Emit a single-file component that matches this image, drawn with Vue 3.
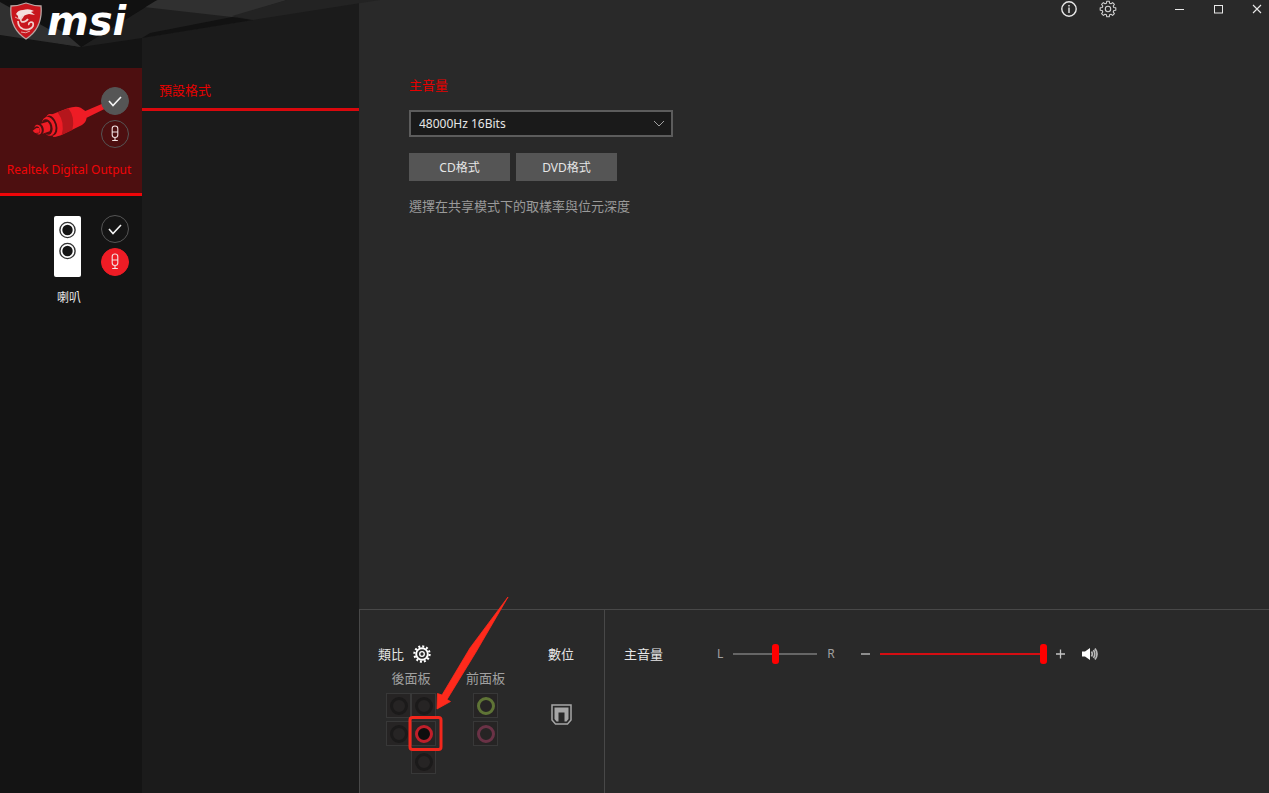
<template>
  <div class="audio-console">
    <!-- Header artwork -->
    <svg class="header-art" width="380" height="48" viewBox="0 0 380 48" aria-hidden="true">
      <polygon points="0,0 157,0 81,47 0,35" fill="#111111" />
      <polygon points="0,2 81,47 0,35" fill="#303030" />
      <polygon points="157,0 81,47 142,38 253,20 287,0" fill="#1f1f1f" />
      <polygon points="158,0 287,0 232,17 135,6" fill="#303030" />
      <polygon points="142,38 253,20 232,17 150,33" fill="#121212" />
      <polygon points="287,0 380,0 253,20 232,16" fill="#232323" />
      <polygon points="0,0 157,0 81,47 56,28 5,0" fill="#111111" />
      <polygon points="56,28 66,34 81,47 40,40" fill="#303030" />
    </svg>

    <!-- Device list -->
    <aside class="devices">
      <div class="brand">
        <svg class="shield" width="34" height="38" viewBox="0 0 34 38" aria-hidden="true">
          <path d="M17 1 Q25 4 32 4 Q34 26 17 37 Q0 26 2 4 Q9 4 17 1Z" fill="#c8161d" stroke="#b9a7a4" stroke-width="1.3" />
          <path d="M7 12 Q9 8 14 8 Q20 6 25 9 L22 10 L26 13 L20 12 Q14 13 14 16 Q9 20 9 14 Z" fill="#f3dfdd" />
          <path d="M14 14 Q10 18 13 20 Q17 20 19 17 M9 19 Q9 25 14 27 Q21 29 24 24 Q25 20 22 20 Q19 21 20 23" fill="none" stroke="#f0cfcc" stroke-width="1.7" />
          <path d="M6 15 L10 17 M12 30 Q17 32 21 29" fill="none" stroke="#e9a5a3" stroke-width="1" />
        </svg>
        <span class="brand-name">msi</span>
      </div>

      <ul class="device-list">
        <li v-for="device in devices" :key="device.id" class="device" :class="{ active: device.id === activeId }">
          <div class="device-body">
            <svg v-if="device.id === 'digital'" class="device-picture" width="101" height="61" viewBox="0 0 101 61" aria-hidden="true">
              <g transform="translate(25 -2) scale(0.3333)">
                <path d="M78 89 L128 70 Q152 62 167 68 L181 78 L232 56 L240 71 L185 98 Q183 112 171 120 L108 151 Q96 156 84 155Z" fill="#ee1c25" />
                <path d="M98 82 L130 70 Q151 96 142 135 L110 150 Q121 114 98 82Z" fill="#b5161c" />
                <ellipse cx="83" cy="121" rx="21" ry="35" transform="rotate(-16 83 121)" fill="#ee1c25" />
                <ellipse cx="78" cy="122" rx="18" ry="31" transform="rotate(-16 78 122)" fill="#4d0f10" />
                <ellipse cx="71" cy="124" rx="20" ry="29" transform="rotate(-16 71 124)" fill="#ee1c25" />
                <ellipse cx="66" cy="126" rx="16" ry="24" transform="rotate(-16 66 126)" fill="#4d0f10" />
                <path d="M43 118 L68 110 Q80 122 74 139 L50 147Z" fill="#ee1c25" />
                <ellipse cx="44" cy="132" rx="12" ry="18" transform="rotate(-16 44 132)" fill="#4d0f10" />
                <ellipse cx="39" cy="134" rx="11" ry="15" transform="rotate(-16 39 134)" fill="#ee1c25" />
                <ellipse cx="36" cy="135" rx="9" ry="11" transform="rotate(-16 36 135)" fill="#4d0f10" />
                <path d="M23 137 L34 129 L43 129 Q46 137 42 143 L30 144Z" fill="#ee1c25" />
              </g>
            </svg>
            <svg v-else class="device-picture" width="101" height="61" viewBox="0 0 101 61" aria-hidden="true">
              <rect x="54" y="1" width="27" height="61" rx="2" fill="#ffffff" />
              <g v-for="cy in [15, 36]" :key="cy">
                <circle cx="67.5" :cy="cy" r="7.6" fill="#ffffff" stroke="#333333" stroke-width="1.4" />
                <circle cx="67.5" :cy="cy" r="5.2" fill="#141414" />
              </g>
            </svg>

            <div class="device-actions">
              <button class="round" :class="{ 'round-grey': device.id === 'digital' }" aria-label="Default device">
                <svg width="26" height="26" viewBox="0 0 26 26">
                  <path d="M7 13 L11 17.5 L19 9" fill="none" stroke="#f4f4f4" stroke-width="1.6" />
                </svg>
              </button>
              <button class="round" :class="{ 'round-red': device.id === 'speaker' }" aria-label="Default communication device">
                <svg width="26" height="26" viewBox="0 0 26 26">
                  <path d="M10.2 7.5 Q10.2 5 13 5 Q15.8 5 15.8 7.5 V14 Q15.8 16.5 13 16.5 Q10.2 16.5 10.2 14Z M10.2 11 H15.8 M13 16.5 V19.5 M10.2 19.5 H15.8" fill="none" stroke="#f4e4e4" stroke-width="1.1" />
                </svg>
              </button>
            </div>
          </div>
          <button class="device-name" @click="activeId = device.id">{{ device.name }}</button>
        </li>
      </ul>
    </aside>

    <!-- Tabs of the selected device -->
    <nav class="tabs">
      <a href="#format" class="tab">預設格式</a>
    </nav>

    <main class="main">
      <header class="title-bar">
        <button aria-label="Information">
          <svg width="18" height="18" viewBox="0 0 18 18">
            <circle cx="9" cy="9" r="7.2" fill="none" stroke="#e8e8e8" stroke-width="1.4" />
            <path d="M9 7.5 V13 M9 5 V6.4" stroke="#e8e8e8" stroke-width="1.4" />
          </svg>
        </button>
        <button class="settings" aria-label="Settings">
          <svg width="18" height="18" viewBox="0 0 18 18">
            <path :d="gearPath" fill="none" stroke="#d0d0d0" stroke-width="1.1" stroke-linejoin="round" />
            <circle cx="9" cy="9" r="2.7" fill="none" stroke="#d0d0d0" stroke-width="1.1" />
          </svg>
        </button>
        <button aria-label="Minimize">
          <svg width="18" height="18" viewBox="0 0 18 18"><path d="M5 9.5 H14" stroke="#e8e8e8" /></svg>
        </button>
        <button aria-label="Maximize">
          <svg width="18" height="18" viewBox="0 0 18 18"><rect x="5.500" y="5.500" width="8" height="7.500" fill="none" stroke="#e8e8e8" /></svg>
        </button>
        <button aria-label="Close">
          <svg width="18" height="18" viewBox="0 0 18 18"><path d="M5 5 L13 13 M13 5 L5 13" stroke="#e8e8e8" stroke-width="1.1" /></svg>
        </button>
      </header>

      <section id="format" class="format">
        <label class="format-title" for="sample-rate">主音量</label>
        <div class="select-box">
          <select id="sample-rate" v-model="sampleRate">
            <option>48000Hz 16Bits</option>
          </select>
          <svg class="chevron" width="12" height="8" viewBox="0 0 12 8" aria-hidden="true">
            <path d="M1 1 L6 6 L11 1" fill="none" stroke="#a0a0a0" />
          </svg>
        </div>
        <div class="format-buttons">
          <button>CD格式</button>
          <button>DVD格式</button>
        </div>
        <p class="format-hint">選擇在共享模式下的取樣率與位元深度</p>
      </section>

      <footer class="bottom">
        <section class="jacks">
          <div class="analog">
            <div class="jack-title">
              <span>類比</span>
              <button class="jack-settings" aria-label="Connector settings">
                <svg width="18" height="18" viewBox="0 0 18 18">
                  <circle cx="9" cy="9" r="5.8" fill="none" stroke="#ffffff" stroke-width="1.9" />
                  <circle cx="9" cy="9" r="7.6" fill="none" stroke="#ffffff" stroke-width="2.2" stroke-dasharray="1.99 1.99" />
                  <circle cx="9" cy="9" r="2.3" fill="none" stroke="#ffffff" stroke-width="1.3" />
                </svg>
              </button>
            </div>
            <div class="panels">
              <div class="panel">
                <span class="panel-name">後面板</span>
                <div class="jack-grid">
                  <button v-for="jack in rearJacks" :key="jack.id" class="jack" :class="jack.id" :aria-label="jack.id">
                    <span class="ring" :class="jack.color"></span>
                  </button>
                </div>
              </div>
              <div class="panel">
                <span class="panel-name">前面板</span>
                <div class="jack-grid front">
                  <button v-for="jack in frontJacks" :key="jack.id" class="jack" :aria-label="jack.id">
                    <span class="ring" :class="jack.color"></span>
                  </button>
                </div>
              </div>
            </div>
          </div>
          <div class="digital">
            <span class="digital-title">數位</span>
            <svg width="21" height="21" viewBox="0 0 21 21" aria-hidden="true">
              <path d="M1 1 H20 V16 L16.5 20 H4.5 L1 16Z" fill="none" stroke="#a6a6a6" stroke-width="1.5" />
              <path d="M3.5 3.5 H17.5 V15 L15.5 17.5 H13.5 V8.5 H7.5 V17.5 H5.5 L3.5 15Z" fill="#a6a6a6" />
            </svg>
          </div>

          <!-- Pointer to the jack in use -->
          <svg class="pointer" width="112" height="166" viewBox="0 0 112 166" aria-hidden="true">
            <rect x="10" y="127.500" width="31" height="32" rx="2.500" fill="none" stroke="#f2271c" stroke-width="3" />
            <path d="M108 7 L70 58 L42 105 L37.500 103.500 L37 119 L50.500 111.500 L47 109.500 L76 62Z" fill="#ff2a1c" stroke="#ff2a1c" stroke-width="0.800" />
          </svg>
        </section>

        <section class="volume">
          <span class="volume-title">主音量</span>
          <div class="balance">
            <span>L</span>
            <input v-model="balance" type="range" min="0" max="100" class="range" aria-label="Balance">
            <span>R</span>
          </div>
          <div class="level">
            <button aria-label="Volume down">
              <svg width="10" height="10" viewBox="0 0 10 10"><path d="M0 5 H9" stroke="#c4c4c4" stroke-width="1.3" /></svg>
            </button>
            <input v-model="volume" type="range" min="0" max="100" class="range range-red" aria-label="Volume">
            <button aria-label="Volume up">
              <svg width="10" height="10" viewBox="0 0 10 10"><path d="M0 5 H9 M4.5 0.5 V9.5" stroke="#c4c4c4" stroke-width="1.3" /></svg>
            </button>
          </div>
          <button class="mute" aria-label="Mute">
            <svg width="18" height="14" viewBox="0 0 18 14">
              <path d="M1 4.5 H4 L9 1 V13 L4 9.5 H1Z" fill="#ffffff" />
              <path d="M10.5 4.5 Q12 7 10.5 9.5 M12.5 3 Q15 7 12.5 11 M14 1.500 Q18 7 14 12.5" fill="none" stroke="#b8b8b8" stroke-width="1.7" />
            </svg>
          </button>
        </section>
      </footer>
    </main>
  </div>
</template>

<script setup>
import { ref } from 'vue'

const activeId = ref('digital')
const sampleRate = ref('48000Hz 16Bits')
const balance = ref(50)
const volume = ref(100)

const devices = [
  { id: 'digital', name: 'Realtek Digital Output' },
  { id: 'speaker', name: '喇叭' }
]

const rearJacks = [
  { id: 'rear-1', color: 'off' },
  { id: 'rear-2', color: 'off' },
  { id: 'rear-3', color: 'off' },
  { id: 'rear-4', color: 'red' },
  { id: 'rear-5', color: 'off' }
]

const frontJacks = [
  { id: 'front-1', color: 'green' },
  { id: 'front-2', color: 'pink' }
]

// Outline of a gear, centred in an 18px box
function buildGear(teeth) {
  const points = []
  const step = (Math.PI * 2) / teeth
  for (let i = 0; i < teeth; i++) {
    const shape = [[-0.34, 6], [-0.2, 7.9], [0.2, 7.9], [0.34, 6]]
    shape.forEach(([offset, radius]) => {
      const angle = (i + offset) * step
      points.push(`${(9 + radius * Math.sin(angle)).toFixed(2)} ${(9 - radius * Math.cos(angle)).toFixed(2)}`)
    })
  }
  return `M${points.join('L')}Z`
}

const gearPath = buildGear(8)
</script>

<style>
body {
  margin: 0;
  background: #292929;
}
</style>

<style scoped>
.audio-console {
  position: relative;
  display: grid;
  grid-template-columns: 142px 217px 1fr;
  min-height: 100vh;
  background: #292929;
  color: #e6e6e6;
  font-family: "Noto Sans", "Noto Sans CJK TC", sans-serif;
  font-size: 13px;
  line-height: 20px;
}

button {
  padding: 0;
  border: none;
  background: none;
  color: inherit;
  font: inherit;
  cursor: pointer;
}

svg {
  display: block;
}

.header-art {
  position: absolute;
  top: 0;
  left: 0;
}

/* Devices */
.devices {
  background: #141414;
}

.brand {
  position: relative;
  display: flex;
  align-items: center;
  gap: 4px;
  box-sizing: border-box;
  height: 68px;
  padding: 0 0 26px 9px;
}

.shield {
  flex-shrink: 0;
}

.brand-name {
  color: #ffffff;
  font-family: "DejaVu Sans", sans-serif;
  font-size: 40px;
  font-style: italic;
  font-weight: 700;
  line-height: 36px;
}

.device-list {
  margin: 0;
  padding: 0;
  list-style: none;
}

.device {
  padding: 19px 0 13px;
  border-bottom: 3px solid transparent;
}

.device.active {
  background: #4d0f10;
  border-bottom-color: #f00508;
}

.device-body {
  display: flex;
}

.device-picture {
  overflow: visible;
}

.device-actions {
  display: flex;
  flex-direction: column;
  gap: 5px;
  z-index: 1;
}

.round {
  box-sizing: border-box;
  width: 28px;
  height: 28px;
  border: 1px solid #555555;
  border-radius: 50%;
}

.round-grey {
  background: #555555;
}

.round-red {
  background: #ee1c25;
  border-color: #ee1c25;
}

.device-name {
  display: block;
  width: 100%;
  margin-top: 12px;
  padding-right: 4px;
  font-size: 12px;
  line-height: 20px;
  white-space: nowrap;
}

.device.active .device-name {
  color: #f00508;
}

/* Tabs */
.tabs {
  padding-top: 80px;
  background: #1b1b1b;
}

.tab {
  display: block;
  padding: 0 17px 8px;
  border-bottom: 3px solid #d9080d;
  color: #e60000;
  text-decoration: none;
}

/* Main area */
.main {
  display: flex;
  flex-direction: column;
  min-width: 0;
}

.title-bar {
  display: flex;
  justify-content: flex-end;
  gap: 15px;
}

.title-bar button {
  display: flex;
  justify-content: center;
  width: 24px;
}

.title-bar .settings {
  margin-right: 32px;
}

.format {
  flex: 1;
  padding: 57px 50px 20px;
}

.format-title {
  display: block;
  margin-bottom: 15px;
  color: #e60000;
}

.select-box {
  position: relative;
  width: 264px;
}

.select-box select {
  display: block;
  width: 100%;
  height: 27px;
  padding: 0 28px 0 8px;
  border: 2px solid #5c5c5c;
  border-radius: 0;
  background: #1a1a1a;
  color: #e6e6e6;
  font-family: inherit;
  font-size: 12px;
  appearance: none;
}

.chevron {
  position: absolute;
  top: 10px;
  right: 8px;
  pointer-events: none;
}

.format-buttons {
  display: flex;
  gap: 6px;
  margin: 16px 0 15px;
}

.format-buttons button {
  width: 101px;
  height: 28px;
  padding-top: 2px;
  background: #555555;
  font-size: 12px;
}

.format-hint {
  margin: 0;
  color: #9a9a9a;
}

/* Bottom bar */
.bottom {
  display: flex;
  border-top: 1px solid #484848;
  border-left: 1px solid #484848;
}

.jacks {
  position: relative;
  display: flex;
  gap: 43px;
  box-sizing: border-box;
  width: 245px;
  padding: 34px 18px 19px;
  border-right: 1px solid #484848;
}

.jack-title {
  display: flex;
  align-items: center;
  gap: 9px;
}

.panels {
  display: flex;
  gap: 30px;
  margin-top: 4px;
  padding-left: 8px;
}

.panel {
  display: flex;
  flex-direction: column;
  align-items: center;
  gap: 5px;
}

.panel-name {
  color: #a0a0a0;
  white-space: nowrap;
}

.jack-grid {
  display: grid;
  grid-template-columns: 25px 25px;
  gap: 3px 0;
}

.jack-grid.front {
  grid-template-columns: 25px;
}

.jack {
  display: grid;
  place-items: center;
  box-sizing: border-box;
  width: 25px;
  height: 25px;
  border: 1px solid #383838;
  background: #262424;
}

.jack.rear-5 {
  grid-column: 2;
}

.ring {
  box-sizing: border-box;
  width: 18px;
  height: 18px;
  border: 3px solid #1b1a1a;
  border-radius: 50%;
}

.ring.red {
  border-color: #c01f2a;
  background: #0e0e0e;
}

.ring.green {
  border-color: #5f7436;
}

.ring.pink {
  border-color: #6a3246;
}

.digital {
  display: flex;
  flex-direction: column;
  align-items: center;
  gap: 40px;
}

.digital-title {
  white-space: nowrap;
}

.pointer {
  position: absolute;
  top: -20px;
  left: 40px;
  pointer-events: none;
}

.volume {
  display: flex;
  flex: 1;
  align-items: center;
  align-self: flex-start;
  padding: 34px 20px 0 19px;
}

.volume-title {
  margin-right: 54px;
}

.balance {
  display: flex;
  align-items: center;
  gap: 10px;
  margin-right: 26px;
  color: #a0a0a0;
  font-size: 12px;
}

.level {
  display: flex;
  align-items: center;
  gap: 9px;
  margin-right: 15px;
}

.range {
  width: 84px;
  height: 20px;
  margin: 0;
  appearance: none;
  background: linear-gradient(#666666, #666666) center / 100% 2px no-repeat;
}

.range-red {
  width: 167px;
  background-image: linear-gradient(#d40d12, #d40d12);
}

.range::-webkit-slider-thumb {
  width: 7px;
  height: 20px;
  appearance: none;
  border-radius: 3px;
  background: #ff0000;
}
</style>
